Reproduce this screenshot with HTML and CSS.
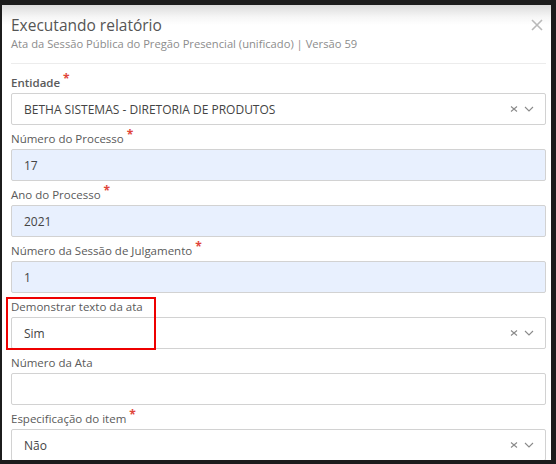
FILE: index.html
```html
<!DOCTYPE html>
<html lang="pt-BR">
<head>
<meta charset="utf-8">
<title>Executando relatório</title>
<link rel="stylesheet" href="styles.css">
</head>
<body>
<div class="modal">
  <div class="modal-header">
    <div class="titles">
      <h1 class="title">Executando relatório</h1>
      <div class="subtitle">Ata da Sessão Pública do Pregão Presencial (unificado) | Versão 59</div>
    </div>
    <button class="close" aria-label="Fechar">
      <svg width="12" height="12" viewBox="0 0 12 12"><path d="M1 1L11 11M11 1L1 11" stroke="#b9b9b9" stroke-width="1.6" fill="none"/></svg>
    </button>
  </div>
  <div class="form">
    <div class="group first">
      <label class="label strong">Entidade<span class="req">*</span></label>
      <div class="input select"><span class="value upper">BETHA SISTEMAS - DIRETORIA DE PRODUTOS</span>
        <span class="icons">
          <svg class="clr" width="8" height="8" viewBox="0 0 8 8"><path d="M1 1.5L7 6.5M7 1.5L1 6.5" stroke="#8a8a8a" stroke-width="1.1" fill="none"/></svg>
          <svg class="chev" width="10" height="6" viewBox="0 0 10 6"><path d="M1 1L5 5L9 1" stroke="#8a8a8a" stroke-width="1.1" fill="none"/></svg>
        </span>
      </div>
    </div>
    <div class="group">
      <label class="label">Número do Processo<span class="req">*</span></label>
      <div class="input filled"><span class="value">17</span></div>
    </div>
    <div class="group">
      <label class="label">Ano do Processo<span class="req">*</span></label>
      <div class="input filled"><span class="value">2021</span></div>
    </div>
    <div class="group">
      <label class="label">Número da Sessão de Julgamento<span class="req">*</span></label>
      <div class="input filled"><span class="value">1</span></div>
    </div>
    <div class="group marked">
      <label class="label">Demonstrar texto da ata</label>
      <div class="input select"><span class="value">Sim</span>
        <span class="icons">
          <svg class="clr" width="8" height="8" viewBox="0 0 8 8"><path d="M1 1.5L7 6.5M7 1.5L1 6.5" stroke="#8a8a8a" stroke-width="1.1" fill="none"/></svg>
          <svg class="chev" width="10" height="6" viewBox="0 0 10 6"><path d="M1 1L5 5L9 1" stroke="#8a8a8a" stroke-width="1.1" fill="none"/></svg>
        </span>
      </div>
      <div class="highlight"></div>
    </div>
    <div class="group">
      <label class="label">Número da Ata</label>
      <div class="input"><span class="value"></span></div>
    </div>
    <div class="group">
      <label class="label">Especificação do item<span class="req">*</span></label>
      <div class="input select"><span class="value">Não</span>
        <span class="icons">
          <svg class="clr" width="8" height="8" viewBox="0 0 8 8"><path d="M1 1.5L7 6.5M7 1.5L1 6.5" stroke="#8a8a8a" stroke-width="1.1" fill="none"/></svg>
          <svg class="chev" width="10" height="6" viewBox="0 0 10 6"><path d="M1 1L5 5L9 1" stroke="#8a8a8a" stroke-width="1.1" fill="none"/></svg>
        </span>
      </div>
    </div>
  </div>
</div>
</body>
</html>
```
FILE: styles.css
```css
* { box-sizing: border-box; }
html, body { margin: 0; padding: 0; }
body {
  background: #1c1c1c;
  font-family: "Open Sans", "Noto Sans", sans-serif;
  width: 556px;
  height: 464px;
  overflow: hidden;
}
.modal {
  margin: 5px 0 0 2px;
  width: 549px;
  height: 455px;
  overflow: hidden;
  background: linear-gradient(#dcdcdc 0px, #f6f6f6 12px, #ffffff 20px);
  padding: 0 5px 0 9px;
}
.modal-header {
  display: flex;
  justify-content: space-between;
  align-items: flex-start;
  padding-top: 9px;
  padding-bottom: 11px;
  border-bottom: 1px solid #ececec;
}
.title {
  margin: 0;
  font-size: 15.5px;
  line-height: 22px;
  font-weight: 400;
  color: #555;
}
.subtitle {
  font-size: 11.2px;
  line-height: 16px;
  color: #8c8c8c;
}
.close {
  border: 0;
  background: none;
  padding: 0;
  margin: 5px 3px 0 0;
  width: 12px;
  height: 12px;
  display: flex;
}
.form { display: flex; flex-direction: column; }
.group {
  position: relative;
  padding-top: 5px;
  display: flex;
  flex-direction: column;
}
.group.first { padding-top: 10px; }
.label {
  font-size: 11.5px;
  line-height: 17px;
  margin-bottom: 2px;
  color: #5a5a5a;
}
.label.strong { font-weight: 600; }
.req {
  color: #e0453a;
  font-weight: 700;
  margin-left: 3px;
  font-size: 12px;
  position: relative;
  top: -4px;
}
.input {
  height: 32px;
  border: 1px solid #d2d2d2;
  border-radius: 2px;
  background: #fff;
  display: flex;
  align-items: center;
  padding: 0 11px 0 12px;
  font-size: 12px;
  color: #444;
}
.input.filled { background: #e8f0fe; }
.value { flex: 1; }
.icons {
  display: flex;
  align-items: center;
  gap: 6px;
}
.highlight {
  position: absolute;
  left: -5px;
  top: 4px;
  width: 150px;
  height: 53px;
  border: 2px solid #ee0000;
}
```
